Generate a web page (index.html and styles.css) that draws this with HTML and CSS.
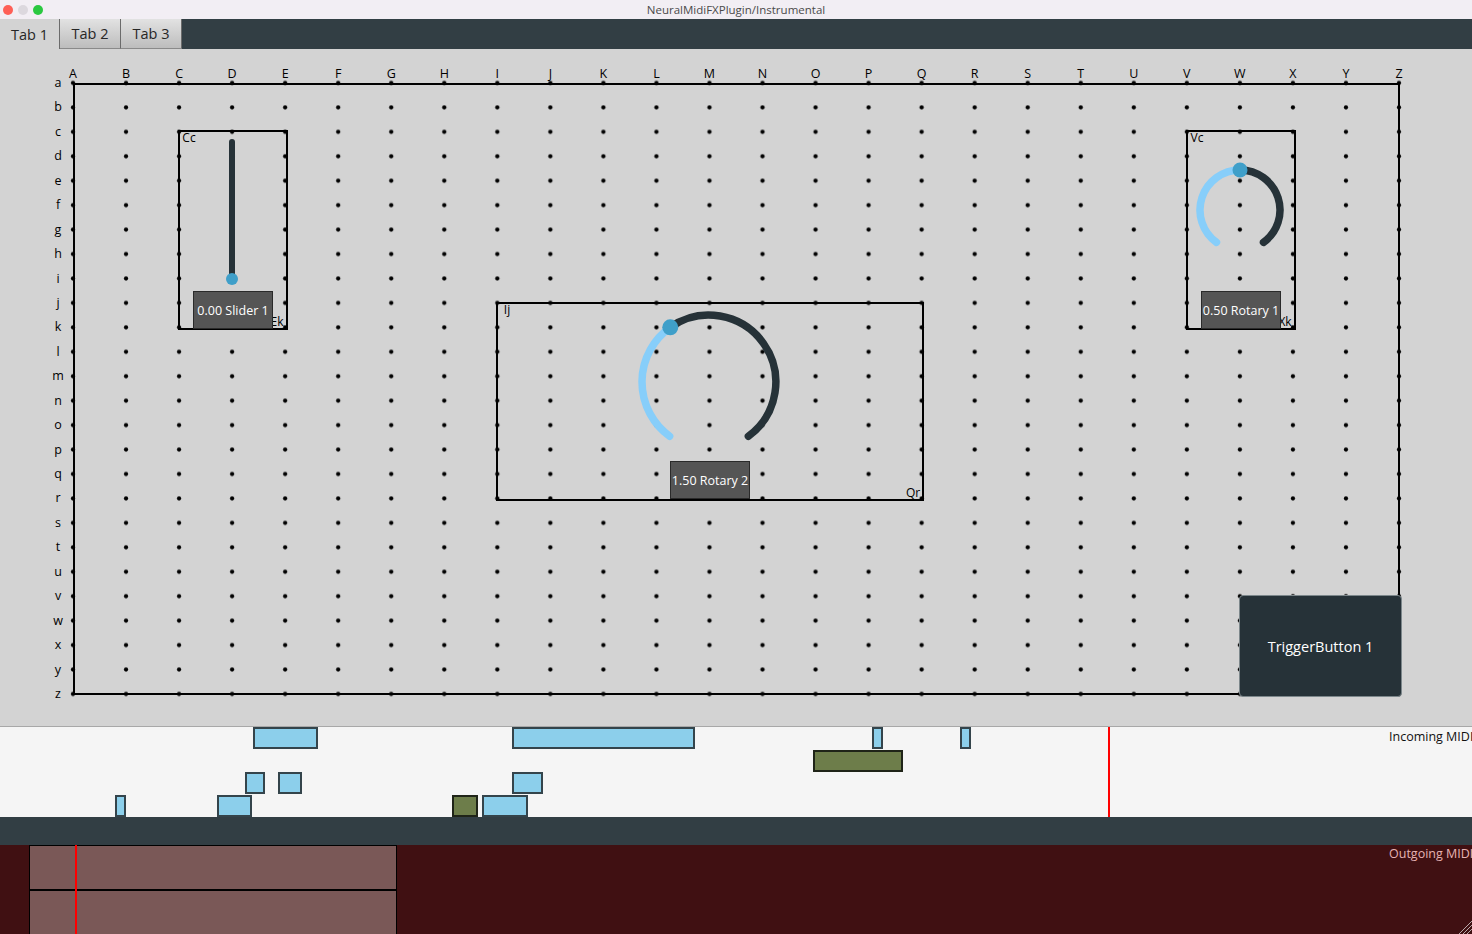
FILE: index.html
```html
<!DOCTYPE html>
<html>
<head>
<meta charset="utf-8">
<title>NeuralMidiFXPlugin/Instrumental</title>
<link rel="stylesheet" href="styles.css">
</head>
<body>
<div class="window">
  <div class="titlebar">
    <div class="lights"><span class="light red"></span><span class="light grey"></span><span class="light green"></span></div>
    <div class="title">NeuralMidiFXPlugin/Instrumental</div>
    <div></div>
  </div>
  <div class="tabbar">
    <div class="tab active">Tab 1</div>
    <div class="tab">Tab 2</div>
    <div class="tab">Tab 3</div>
  </div>
  <div class="main">
    <svg class="grid" width="1472" height="677" viewBox="0 49 1472 677">
      <defs>
        <pattern id="dots" x="46.48" y="70.78" width="53.04" height="24.44" patternUnits="userSpaceOnUse">
          <circle cx="26.52" cy="12.22" r="2.1" fill="#000"/>
        </pattern>
      </defs>
      <rect x="74" y="84" width="1325" height="610" fill="none" stroke="#000" stroke-width="2"/>
      <rect x="46.48" y="70.78" width="1379.04" height="635.44" fill="url(#dots)"/>
      <g class="cols">
        <text x="73" y="77.5">A</text><text x="126.04" y="77.5">B</text><text x="179.08" y="77.5">C</text><text x="232.12" y="77.5">D</text><text x="285.16" y="77.5">E</text><text x="338.2" y="77.5">F</text><text x="391.24" y="77.5">G</text><text x="444.28" y="77.5">H</text><text x="497.32" y="77.5">I</text><text x="550.36" y="77.5">J</text><text x="603.4" y="77.5">K</text><text x="656.44" y="77.5">L</text><text x="709.48" y="77.5">M</text><text x="762.52" y="77.5">N</text><text x="815.56" y="77.5">O</text><text x="868.6" y="77.5">P</text><text x="921.64" y="77.5">Q</text><text x="974.68" y="77.5">R</text><text x="1027.72" y="77.5">S</text><text x="1080.76" y="77.5">T</text><text x="1133.8" y="77.5">U</text><text x="1186.84" y="77.5">V</text><text x="1239.88" y="77.5">W</text><text x="1292.92" y="77.5">X</text><text x="1345.96" y="77.5">Y</text><text x="1399" y="77.5">Z</text>
      </g>
      <g class="rows">
        <text x="58" y="87">a</text><text x="58" y="111.44">b</text><text x="58" y="135.88">c</text><text x="58" y="160.32">d</text><text x="58" y="184.76">e</text><text x="58" y="209.2">f</text><text x="58" y="233.64">g</text><text x="58" y="258.08">h</text><text x="58" y="282.52">i</text><text x="58" y="306.96">j</text><text x="58" y="331.4">k</text><text x="58" y="355.84">l</text><text x="58" y="380.28">m</text><text x="58" y="404.72">n</text><text x="58" y="429.16">o</text><text x="58" y="453.6">p</text><text x="58" y="478.04">q</text><text x="58" y="502.48">r</text><text x="58" y="526.92">s</text><text x="58" y="551.36">t</text><text x="58" y="575.8">u</text><text x="58" y="600.24">v</text><text x="58" y="624.68">w</text><text x="58" y="649.12">x</text><text x="58" y="673.56">y</text><text x="58" y="698">z</text>
      </g>
    </svg>

    <div class="comp comp-slider">
      <span class="corner tl">Cc</span>
      <span class="corner br">Ek</span>
      <svg class="widget" width="106" height="159" viewBox="180 132 106 159">
        <line x1="232" y1="142" x2="232" y2="279" stroke="#263238" stroke-width="6" stroke-linecap="round"/>
        <circle cx="232" cy="279" r="6" fill="#3f9fc9"/>
      </svg>
      <div class="valuebox">0.00 Slider 1</div>
    </div>

    <div class="comp comp-rotary1">
      <span class="corner tl">Vc</span>
      <span class="corner br">Xk</span>
      <svg class="widget" width="106" height="159" viewBox="1188 132 106 159">
        <path d="M1216.49 242.36 A40 40 0 0 1 1240 170" fill="none" stroke="#87cefa" stroke-width="7.5" stroke-linecap="round"/>
        <path d="M1240 170 A40 40 0 0 1 1263.51 242.36" fill="none" stroke="#263238" stroke-width="7.5" stroke-linecap="round"/>
        <circle cx="1240" cy="170" r="7.5" fill="#3f9fc9"/>
      </svg>
      <div class="valuebox">0.50 Rotary 1</div>
    </div>

    <div class="comp comp-rotary2">
      <span class="corner tl">Ij</span>
      <span class="corner br">Qr</span>
      <svg class="widget" width="424" height="157" viewBox="498 304 424 157">
        <path d="M669.62 436.2 A67 67 0 0 1 670.28 327.32" fill="none" stroke="#87cefa" stroke-width="7.5" stroke-linecap="round"/>
        <path d="M670.28 327.32 A67 67 0 0 1 748.38 436.2" fill="none" stroke="#263238" stroke-width="7.5" stroke-linecap="round"/>
        <circle cx="670.28" cy="327.32" r="8" fill="#3f9fc9"/>
      </svg>
      <div class="valuebox">1.50 Rotary 2</div>
    </div>

    <div class="trigger">TriggerButton 1</div>
  </div>

  <div class="incoming">
    <div class="note" style="left:253px;top:0;width:65px"></div>
    <div class="note" style="left:512px;top:0;width:183px"></div>
    <div class="note" style="left:872px;top:0;width:11px"></div>
    <div class="note" style="left:960px;top:0;width:11px"></div>
    <div class="note green" style="left:813px;top:23px;width:90px"></div>
    <div class="note" style="left:245px;top:45px;width:20px"></div>
    <div class="note" style="left:278px;top:45px;width:24px"></div>
    <div class="note" style="left:512px;top:45px;width:31px"></div>
    <div class="note" style="left:115px;top:68px;width:11px"></div>
    <div class="note" style="left:217px;top:68px;width:35px"></div>
    <div class="note green" style="left:452px;top:68px;width:26px"></div>
    <div class="note" style="left:482px;top:68px;width:46px"></div>
    <div class="playhead in-head"></div>
    <div class="midilabel in-label">Incoming MIDI</div>
  </div>

  <div class="midbar"></div>

  <div class="outgoing">
    <div class="outpanel">
      <div class="outrow"></div>
      <div class="outrow second"></div>
    </div>
    <div class="playhead out-head"></div>
    <div class="midilabel out-label">Outgoing MIDI</div>
    <svg class="resizer" width="14" height="14" viewBox="0 0 14 14">
      <line x1="14" y1="1" x2="1" y2="14" stroke="#b9a9aa" stroke-width="1"/>
      <line x1="14" y1="5" x2="5" y2="14" stroke="#b9a9aa" stroke-width="1"/>
      <line x1="14" y1="9" x2="9" y2="14" stroke="#b9a9aa" stroke-width="1"/>
    </svg>
  </div>
</div>
</body>
</html>
```

FILE: styles.css
```css
* { box-sizing: border-box; }
html, body { margin: 0; padding: 0; }
body {
  width: 1472px;
  height: 934px;
  overflow: hidden;
  background: #d3d3d3;
  font-family: "Open Sans", "DejaVu Sans", sans-serif;
}
.window {
  display: flex;
  flex-direction: column;
  width: 1472px;
  height: 934px;
}

/* title bar */
.titlebar {
  flex: none;
  height: 19px;
  background: #f2eef4;
  display: grid;
  grid-template-columns: 1fr auto 1fr;
  align-items: center;
}
.lights { display: flex; gap: 5px; padding-left: 3px; }
.light { width: 10px; height: 10px; border-radius: 50%; }
.red { background: #fe5f57; }
.grey { background: #dcd8de; }
.green { background: #2ac840; }
.title { font-size: 11.5px; line-height: 19px; color: #4a4a4a; }

/* tabs */
.tabbar {
  flex: none;
  height: 30px;
  background: #323e44;
  display: flex;
}
.tab {
  width: 61px;
  display: flex;
  align-items: center;
  justify-content: center;
  font-size: 14.5px;
  color: #262626;
  background: linear-gradient(#e2e2e2, #bdbdbd);
  border-right: 1px solid #6b6b6b;
  border-bottom: 1px solid #8a8a8a;
}
.tab.active {
  width: 60px;
  background: #d3d3d3;
  border-bottom: none;
}

/* main canvas */
.main {
  flex: none;
  height: 677px;
  position: relative;
  background: #d3d3d3;
}
.grid { display: block; }
.grid text {
  font-family: "Open Sans", "DejaVu Sans", sans-serif;
  font-size: 12.5px;
  fill: #000;
  text-anchor: middle;
}

.comp {
  position: absolute;
  border: 2px solid #000;
  display: flex;
  flex-direction: column;
  align-items: center;
}
.comp-slider { left: 178px; top: 81px; width: 110px; height: 200px; }
.comp-rotary1 { left: 1186px; top: 81px; width: 110px; height: 200px; }
.comp-rotary2 { left: 496px; top: 253px; width: 428px; height: 199px; }
.widget { display: block; flex: none; }
.corner {
  position: absolute;
  width: 18px;
  text-align: center;
  font-size: 12px;
  line-height: 12px;
  color: #000;
}
.corner.tl { left: 0; top: 0; }
.corner.br { right: 0; bottom: 0; }
.valuebox {
  position: relative;
  z-index: 1;
  flex: none;
  width: 80px;
  height: 38px;
  margin-bottom: -1px;
  background: #555555;
  border: 1px solid #2a2a2a;
  color: #ffffff;
  font-size: 12.5px;
  display: flex;
  align-items: center;
  justify-content: center;
}
.trigger {
  position: absolute;
  left: 1239px;
  top: 546px;
  width: 163px;
  height: 102px;
  background: #263238;
  border: 1px solid #7c878b;
  border-radius: 4px;
  color: #ffffff;
  font-size: 14.5px;
  display: flex;
  align-items: center;
  justify-content: center;
}

/* incoming midi */
.incoming {
  flex: none;
  height: 91px;
  position: relative;
  background: #f5f5f5;
  border-top: 1px solid #a8a8a8;
}
.note {
  position: absolute;
  height: 22px;
  background: #8ccfeb;
  border: 2px solid #34444b;
}
.note.green {
  background: #6d7d4a;
  border-color: #1f2418;
}
.playhead {
  position: absolute;
  top: 0;
  bottom: 0;
  width: 2px;
  background: #ff0000;
}
.in-head { left: 1108px; }
.midilabel {
  position: absolute;
  left: 1389px;
  font-size: 12.5px;
  line-height: 16px;
  white-space: nowrap;
}
.in-label { top: 2px; color: #111111; }

.midbar {
  flex: none;
  height: 28px;
  background: #323e44;
}

/* outgoing midi */
.outgoing {
  flex: none;
  height: 89px;
  position: relative;
  background: #401012;
  display: flex;
  padding-left: 29px;
}
.outpanel {
  width: 368px;
  display: flex;
  flex-direction: column;
  border: 1px solid #000;
  border-bottom: none;
}
.outrow {
  height: 43px;
  background: #7a5857;
}
.outrow.second {
  flex: 1;
  border-top: 2px solid #000;
}
.out-head { left: 75px; }
.out-label { top: 1px; color: #e6b3b3; }
.resizer {
  position: absolute;
  right: 0;
  bottom: 0;
}
```
